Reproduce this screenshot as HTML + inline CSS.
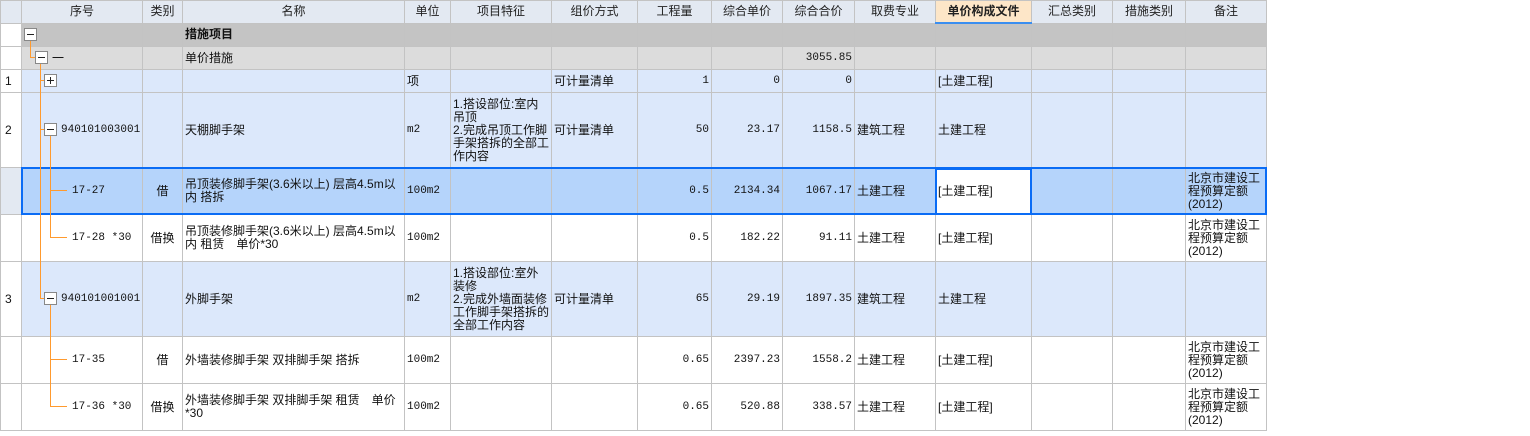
<!DOCTYPE html>
<html><head><meta charset="utf-8"><style>
body{margin:0;background:#fff;width:1530px;height:436px;overflow:hidden;position:relative;font-family:"Liberation Sans","Noto Sans CJK SC","WenQuanYi Zen Hei",sans-serif;font-size:12px;color:#111}
table{position:absolute;left:0;top:0;border-collapse:collapse;table-layout:fixed;width:1267px}
td{border:1px solid #c3c3c3;padding:0 2px;line-height:13px;vertical-align:middle;overflow:hidden;white-space:nowrap}
td.w{white-space:normal;word-break:break-all}
tr.h td{background:#e3e9f2;text-align:center;height:21px;color:#222}
tr.h td.sel{background:#fde6c8;font-weight:bold;border-bottom:2px solid #3a8ef0}
tr.g1 td{background:#c4c4c4;height:22px}
tr.g2 td{background:#dcdcdc;height:22px}
tr.b td{background:#dce8fb}
tr.s td{background:#b5d4fb}
tr.wt td{background:#fff}
td.n{background:#fff !important;text-align:left;padding-left:4px}
tr.s td.n{background:#e3e9f2 !important}
tr.h td.n{background:#e3e9f2 !important}
.r{text-align:right}
.c{text-align:center}
.mono{font-family:"Liberation Mono","Noto Sans CJK SC",monospace;font-size:11px}
</style></head><body>
<table>
<colgroup><col style="width:21px"><col style="width:121px"><col style="width:40px"><col style="width:222px"><col style="width:46px"><col style="width:101px"><col style="width:86px"><col style="width:74px"><col style="width:71px"><col style="width:72px"><col style="width:81px"><col style="width:96px"><col style="width:81px"><col style="width:73px"><col style="width:81px"></colgroup>
<tr class="h"><td class="n"></td><td>序号</td><td>类别</td><td>名称</td><td>单位</td><td>项目特征</td><td>组价方式</td><td>工程量</td><td>综合单价</td><td>综合合价</td><td>取费专业</td><td class="sel">单价构成文件</td><td>汇总类别</td><td>措施类别</td><td>备注</td></tr>
<tr class="g1"><td class="n"></td><td></td><td></td><td style="font-weight:bold">措施项目</td><td></td><td></td><td></td><td></td><td></td><td></td><td></td><td></td><td></td><td></td><td></td></tr>
<tr class="g2"><td class="n"></td><td style="padding-left:30px">一</td><td></td><td>单价措施</td><td></td><td></td><td></td><td></td><td></td><td class="r mono">3055.85</td><td></td><td></td><td></td><td></td><td></td></tr>
<tr class="b" style="height:23px"><td class="n">1</td><td></td><td></td><td></td><td>项</td><td></td><td>可计量清单</td><td class="r mono">1</td><td class="r mono">0</td><td class="r mono">0</td><td></td><td>[土建工程]</td><td></td><td></td><td></td></tr>
<tr class="b" style="height:75px"><td class="n">2</td><td class="mono" style="padding-left:39px">940101003001</td><td></td><td>天棚脚手架</td><td class="mono">m2</td><td class="w">1.搭设部位:室内吊顶<br>2.完成吊顶工作脚手架搭拆的全部工作内容</td><td>可计量清单</td><td class="r mono">50</td><td class="r mono">23.17</td><td class="r mono">1158.5</td><td>建筑工程</td><td>土建工程</td><td></td><td></td><td></td></tr>
<tr class="s" style="height:47px"><td class="n"></td><td class="mono" style="padding-left:50px">17-27</td><td class="c">借</td><td class="w">吊顶装修脚手架(3.6米以上) 层高4.5m以内 搭拆</td><td class="mono">100m2</td><td></td><td></td><td class="r mono">0.5</td><td class="r mono">2134.34</td><td class="r mono">1067.17</td><td>土建工程</td><td style="background:#fff">[土建工程]</td><td></td><td></td><td>北京市建设工<br>程预算定额<br>(2012)</td></tr>
<tr class="wt" style="height:47px"><td class="n"></td><td class="mono" style="padding-left:50px">17-28 *30</td><td class="c">借换</td><td class="w">吊顶装修脚手架(3.6米以上) 层高4.5m以内 租赁　单价*30</td><td class="mono">100m2</td><td></td><td></td><td class="r mono">0.5</td><td class="r mono">182.22</td><td class="r mono">91.11</td><td>土建工程</td><td>[土建工程]</td><td></td><td></td><td>北京市建设工<br>程预算定额<br>(2012)</td></tr>
<tr class="b" style="height:75px"><td class="n">3</td><td class="mono" style="padding-left:39px">940101001001</td><td></td><td>外脚手架</td><td class="mono">m2</td><td class="w">1.搭设部位:室外装修<br>2.完成外墙面装修工作脚手架搭拆的全部工作内容</td><td>可计量清单</td><td class="r mono">65</td><td class="r mono">29.19</td><td class="r mono">1897.35</td><td>建筑工程</td><td>土建工程</td><td></td><td></td><td></td></tr>
<tr class="wt" style="height:47px"><td class="n"></td><td class="mono" style="padding-left:50px">17-35</td><td class="c">借</td><td>外墙装修脚手架 双排脚手架 搭拆</td><td class="mono">100m2</td><td></td><td></td><td class="r mono">0.65</td><td class="r mono">2397.23</td><td class="r mono">1558.2</td><td>土建工程</td><td>[土建工程]</td><td></td><td></td><td>北京市建设工<br>程预算定额<br>(2012)</td></tr>
<tr class="wt" style="height:47px"><td class="n"></td><td class="mono" style="padding-left:50px">17-36 *30</td><td class="c">借换</td><td class="w">外墙装修脚手架 双排脚手架 租赁　单价<br>*30</td><td class="mono">100m2</td><td></td><td></td><td class="r mono">0.65</td><td class="r mono">520.88</td><td class="r mono">338.57</td><td>土建工程</td><td>[土建工程]</td><td></td><td></td><td>北京市建设工<br>程预算定额<br>(2012)</td></tr>
</table>
<div style="position:absolute;left:21px;top:167px;width:1242px;height:44px;border:2px solid #0a6cf5"></div>
<div style="position:absolute;left:935px;top:168px;width:93px;height:43px;border:2px solid #0a6cf5"></div>
<svg style="position:absolute;left:0;top:0" width="300" height="436">
<g stroke="#ff9a2e" stroke-width="1" fill="none" shape-rendering="crispEdges">
<path d="M30.5 40V57.5H36"/>
<path d="M40.5 63V298.5H45"/>
<path d="M40 80.5H45M40 129.5H45"/>
<path d="M50.5 136V237.5H67M50 190.5H67"/>
<path d="M50.5 304V406.5H67M50 359.5H67"/>
</g>
<g fill="#fff" stroke="#888" shape-rendering="crispEdges">
<rect x="24.5" y="28.5" width="12" height="12"/>
<rect x="35.5" y="51.5" width="12" height="12"/>
<rect x="44.5" y="74.5" width="12" height="12"/>
<rect x="44.5" y="123.5" width="12" height="12"/>
<rect x="44.5" y="292.5" width="12" height="12"/>
</g>
<g stroke="#222" stroke-width="1" shape-rendering="crispEdges">
<path d="M27 34.5H34M38 57.5H45M47 80.5H54M50.5 77V84M47 129.5H54M47 298.5H54"/>
</g>
</svg>
</body></html>
